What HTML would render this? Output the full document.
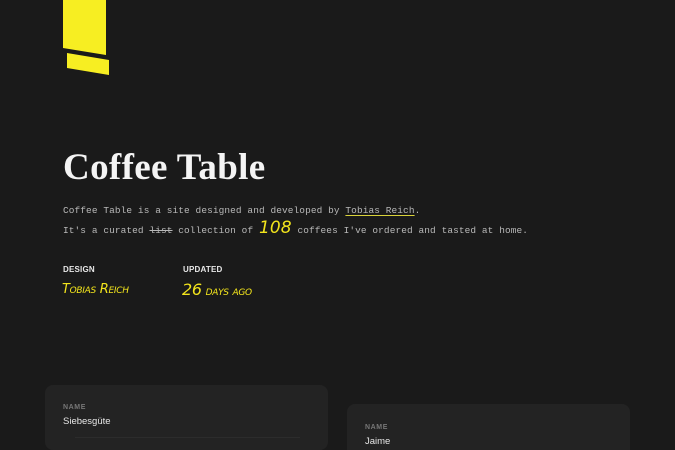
<!DOCTYPE html>
<html><head><meta charset="utf-8"><style>
html,body{margin:0;padding:0;width:675px;height:450px;overflow:hidden;background:#1a1a1a;font-family:"Liberation Sans",sans-serif;position:relative}
.abs{position:absolute}
h1{position:absolute;left:63px;top:148px;margin:0;font-family:"Liberation Serif",serif;font-weight:bold;font-size:37px;color:#f4f4f4;letter-spacing:0.35px;line-height:40px}
.p{position:absolute;left:63px;font-family:"Liberation Mono",monospace;font-size:9.45px;color:#b8b8b8;white-space:nowrap;letter-spacing:0.1px;line-height:12px}
.p u{text-decoration-color:#d9d23a;text-underline-offset:2px}
.hand{font-family:"DejaVu Sans",sans-serif;color:#f2e41c;font-style:italic;font-weight:300}
.lbl{position:absolute;top:265px;font-size:8px;font-weight:bold;color:#e8e8e8;letter-spacing:0.2px}
.val{position:absolute;top:282px;font-size:13px;font-variant:small-caps;letter-spacing:-0.3px;line-height:16px}
.card{position:absolute;background:#232323;border-radius:8px}
.cl{position:absolute;font-size:7px;color:#777;letter-spacing:0.6px;font-weight:bold}
.cv{position:absolute;font-size:9.5px;color:#e6e6e6}
</style></head><body>
<svg class="abs" style="left:0;top:0" width="675" height="90">
<polygon points="63,0 106,0 106,55 63,48" fill="#f7ee22"/>
<polygon points="67,53 109,60 109,75 67,68" fill="#f7ee22"/>
</svg>
<h1>Coffee Table</h1>
<div class="p" style="top:205px">Coffee Table is a site designed and developed by <u>Tobias Reich</u>.</div>
<div class="p" style="top:222px">It's a curated <s>list</s> collection of <span class="hand" style="font-size:17px;line-height:12px">108</span> coffees I've ordered and tasted at home.</div>
<div class="lbl" style="left:63px">DESIGN</div>
<div class="lbl" style="left:183px">UPDATED</div>
<div class="val hand" style="left:62px">Tobias Reich</div>
<div class="val hand" style="left:182px"><span style="font-size:16px">26</span> days ago</div>
<div class="card" style="left:45px;top:385px;width:283px;height:65px">
<div class="cl" style="left:18px;top:19px">NAME</div>
<div class="cv" style="left:18px;top:31px">Siebesgüte</div>
<div class="abs" style="left:30px;top:52px;width:225px;height:1px;background:#2c2c2c"></div>
</div>
<div class="card" style="left:347px;top:404px;width:283px;height:46px;border-radius:8px 8px 0 0">
<div class="cl" style="left:18px;top:20px">NAME</div>
<div class="cv" style="left:18px;top:32px">Jaime</div>
</div>
</body></html>
